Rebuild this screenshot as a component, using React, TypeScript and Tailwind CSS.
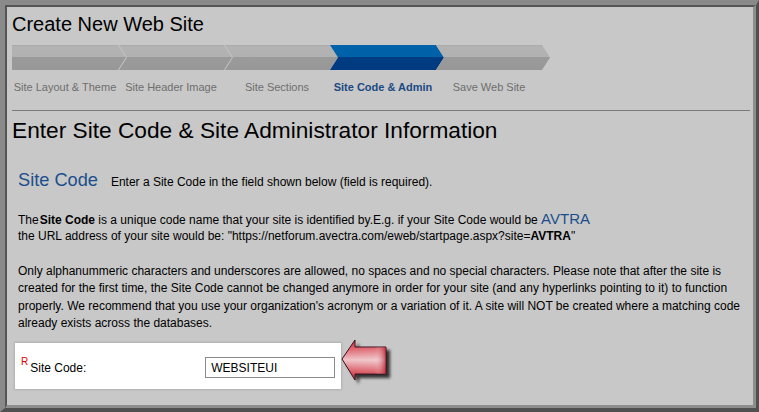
import React from "react";

const tips = [114, 220, 326, 432, 538];
const D = 8;
const H = 25;

function segPoints(i: number) {
  const tip = tips[i];
  const right = `${tip - D},0 ${tip},${H / 2} ${tip - D},${H}`;
  if (i === 0) return `0,0 ${right} 0,${H}`;
  const p = tips[i - 1];
  return `${p - D},0 ${right} ${p - D},${H} ${p},${H / 2}`;
}

function StepBar() {
  return (
    <svg width="540" height="25" viewBox="0 0 540 25" className="block">
      <defs>
        <linearGradient id="g" x1="0" y1="0" x2="0" y2="25" gradientUnits="userSpaceOnUse">
          <stop offset="0" stopColor="#a6a6a6" />
          <stop offset="0.05" stopColor="#b3b3b3" />
          <stop offset="0.5" stopColor="#b1b1b1" />
          <stop offset="0.5" stopColor="#9a9a9a" />
          <stop offset="1" stopColor="#989898" />
        </linearGradient>
        <linearGradient id="b" x1="0" y1="0" x2="0" y2="25" gradientUnits="userSpaceOnUse">
          <stop offset="0" stopColor="#0062aa" />
          <stop offset="0.5" stopColor="#0061a8" />
          <stop offset="0.5" stopColor="#003c82" />
          <stop offset="1" stopColor="#003a80" />
        </linearGradient>
      </defs>
      {tips.map((_, i) => (
        <polygon key={i} points={segPoints(i)} fill={i === 3 ? "url(#b)" : "url(#g)"} />
      ))}
      {[0, 1].map((i) => (
        <polyline
          key={i}
          points={`${tips[i] - D + 0.5},0 ${tips[i] + 0.5},${H / 2} ${tips[i] - D + 0.5},${H}`}
          fill="none"
          stroke="#c4c4c4"
          strokeWidth="1"
        />
      ))}
    </svg>
  );
}

function Arrow() {
  return (
    <svg width="56" height="56" viewBox="0 0 56 56" className="block">
      <defs>
        <linearGradient id="af" x1="0" y1="0" x2="0" y2="1">
          <stop offset="0" stopColor="#c8202e" />
          <stop offset="0.2" stopColor="#dc5a64" />
          <stop offset="0.5" stopColor="#efc4c7" />
          <stop offset="0.8" stopColor="#d95560" />
          <stop offset="1" stopColor="#b81a28" />
        </linearGradient>
        <linearGradient id="af2" x1="0" y1="0" x2="1" y2="0">
          <stop offset="0" stopColor="#ffffff" stopOpacity="0" />
          <stop offset="0.75" stopColor="#ffffff" stopOpacity="0.1" />
          <stop offset="1" stopColor="#a81424" stopOpacity="0.7" />
        </linearGradient>
        <filter id="sh" x="-20%" y="-20%" width="150%" height="150%">
          <feGaussianBlur stdDeviation="1.8" />
        </filter>
      </defs>
      <polygon
        points="7,31 20,11 20,18 51,18 51,46 20,46 20,52"
        fill="#111"
        opacity="0.8"
        filter="url(#sh)"
      />
      <polygon points="3,27 16,8 16,15 47,15 47,42 16,42 16,48" fill="url(#af)" stroke="#3a0c1a" strokeWidth="1" />
      <polygon points="3,27 16,8 16,15 47,15 47,42 16,42 16,48" fill="url(#af2)" />
    </svg>
  );
}

export default function App() {
  const steps = ["Site Layout & Theme", "Site Header Image", "Site Sections", "Site Code & Admin", "Save Web Site"];
  return (
    <div
      className="w-[759px] h-[412px] border-t-[5px] border-l-[5px] border-r-[3px] border-b-[4px] border-t-[#8a8a8a] border-l-[#8a8a8a] border-r-[#505050] border-b-[#505050] overflow-hidden"
      style={{ fontFamily: '"Liberation Sans", Arial, sans-serif' }}
    >
      <div className="h-full border-t-2 border-l-2 border-r-[3px] border-b-[3px] border-t-[#555] border-l-[#555] border-r-[#8e8e8e] border-b-[#8e8e8e] bg-[#c8c8c8] text-black">
        <div className="pl-[5px] pt-[5px] text-[20px] leading-[24px]">Create New Web Site</div>
        <div className="ml-[5px] mt-[9px]">
          <StepBar />
        </div>
        <div className="flex ml-[5px] mt-[11px] text-[11px] leading-[13px]">
          {steps.map((s, i) => (
            <div
              key={s}
              className={
                i === 3
                  ? "w-[106px] text-center whitespace-nowrap font-bold text-[#1b4a84]"
                  : "w-[106px] text-center whitespace-nowrap text-[#6e6e6e]"
              }
            >
              {s}
            </div>
          ))}
        </div>
        <div className="ml-[5px] mr-[3px] mt-[16px] h-px bg-[#7a7a7a]" />
        <div className="pl-[5px] mt-[6px] text-[22.7px] leading-[27px]">
          Enter Site Code &amp; Site Administrator Information
        </div>
        <div className="pl-[11px] mt-[25px] flex items-baseline leading-[22px]">
          <span className="text-[18.2px] text-[#1b4f8c]">Site Code</span>
          <span className="ml-[13px] text-[12px]">Enter a Site Code in the field shown below (field is required).</span>
        </div>
        <div className="pl-[11px] mt-[18px] text-[12px] leading-[16px] whitespace-nowrap">
          The<b className="ml-[1px]">Site Code</b> is a unique code name that your site is identified by.E.g. if your Site Code would be{" "}
          <span className="text-[15px] leading-none text-[#1b4f8c]">AVTRA</span>
          <br />
          the URL address of your site would be: "https://netforum.avectra.com/eweb/startpage.aspx?site=<b>AVTRA</b>"
        </div>
        <div className="pl-[11px] mt-[19px] text-[12px] leading-[17.4px] whitespace-nowrap">
          Only alphanummeric characters and underscores are allowed, no spaces and no special characters. Please note that after the site is
          <br />
          created for the first time, the Site Code cannot be changed anymore in order for your site (and any hyperlinks pointing to it) to function
          <br />
          properly. We recommend that you use your organization's acronym or a variation of it. A site will NOT be created where a matching code
          <br />
          already exists across the databases.
        </div>
        <div className="flex items-start mt-[10px] ml-[8px]">
          <div className="w-[326px] h-[46px] bg-white shadow-[0_0_2px_1px_rgba(0,0,0,0.12)] flex items-center pl-[6px] text-[12px]">
            <span className="self-start mt-[14px] text-[10px] leading-none text-[#e00000]">R</span>
            <span className="ml-[2px] mt-[4px]">Site Code:</span>
            <div className="ml-[119px] mt-[4px] w-[130px] h-[21px] border border-[#8a8a8a] bg-white flex items-center pl-[5px] text-[12px]">
              WEBSITEUI
            </div>
          </div>
          <div className="-mt-[11px] ml-[-2px]">
            <Arrow />
          </div>
        </div>
      </div>
    </div>
  );
}
